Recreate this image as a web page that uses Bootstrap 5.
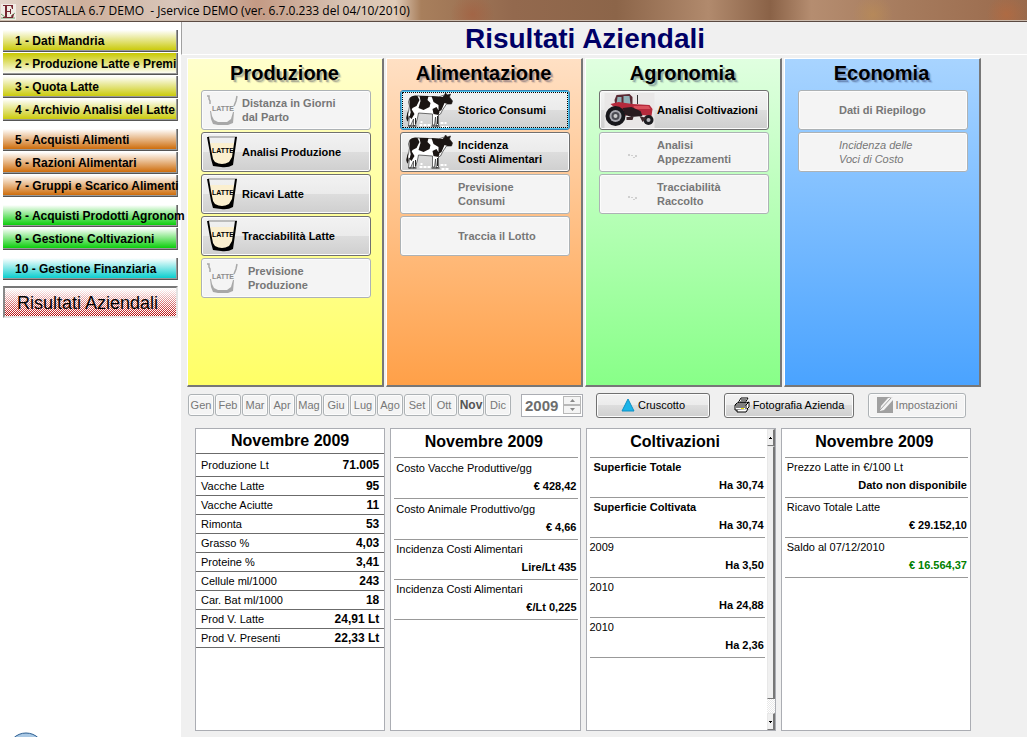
<!DOCTYPE html>
<html lang="it">
<head>
<meta charset="utf-8">
<meta name="viewport" content="width=device-width, initial-scale=1">
<title>ECOSTALLA 6.7 DEMO</title>
<link href="https://cdn.jsdelivr.net/npm/bootstrap@5.3.0/dist/css/bootstrap.min.css" rel="stylesheet">
<script src="https://cdn.jsdelivr.net/npm/bootstrap@5.3.0/dist/js/bootstrap.bundle.min.js" defer></script>
<style>
  body { font-family: "Liberation Sans", Arial, sans-serif; font-size: 11px; line-height: 14px; color: #000; background: #f0f0f0; }
  button { color: #000; }

  /* title bar */
  .app-title { height: 22px; padding-left: 1px; gap: 5px; border-bottom: 1px solid #5b4a42;
    font: 12px/21px "Open Sans", sans-serif; box-shadow: inset 0 -1px #cdbcae; white-space: pre;
    background:
      radial-gradient(circle at 46% 70%, #a8583880 0, #a8583800 22px),
      radial-gradient(circle at 98% 70%, #c0683880 0, #c0683800 20px),
      radial-gradient(circle at 85% 70%, #c0905080 0, #c0905000 20px),
      linear-gradient(90deg, #e3d5cb 0, #cfb09c 8%, #d8c6ba 17%, #c49a84 25%, #d5c0b0 33%, #e0cbb8 38.5%, #a87f5c 41%, #93694e 50%, #8c6549 60%, #b18a6d 69%, #8a6247 75%, #b58d70 79%, #a67b5d 88%, #9a6a4c 100%); }

  /* side menu */
  .side { width: 181px; flex: none; background: #fff; padding: 8px 3px 0; }
  .side-group { margin-bottom: 7px; }
  .side-btn { display: block; width: 100%; height: 22px; margin-bottom: 1px; padding: 0 0 0 12px; text-align: left;
    font-size: 12px; font-weight: 700; line-height: 22px; white-space: nowrap;
    border: 0; border-right: 1px solid #666; border-bottom: 1px solid #555; box-shadow: inset -1px -1px #999;
    background: linear-gradient(#fff, var(--tone)); }
  .side-btn.flip { background: linear-gradient(var(--tone), #fff); }
  .tone-milk { --tone: #c8c800; } .tone-feed { --tone: #cc6600; } .tone-crop { --tone: #00cc00; } .tone-cash { --tone: #00cccc; }
  .tone-cash { margin-bottom: 5px; }
  .side-current { display: block; width: 100%; height: 32px; padding: 0 0 0 12px; text-align: left; font-size: 18px; line-height: 30px;
    white-space: nowrap; border: 2px solid; border-color: #777 #e4e4e4 #e4e4e4 #888;
    background: repeating-conic-gradient(#fff 0 25%, #fff0 0 50%) 0 0 / 2px 2px, linear-gradient(#fff, #b80000); }

  /* heading */
  .page-head { border-left: 1px solid #a0a0a0; border-bottom: 1px solid #fff; height: 33px; padding-right: 39px; }
  .page-head h1 { margin: 0; font-size: 28px; line-height: 34px; font-weight: 700; color: #000066; }

  /* area panels */
  .areas { display: grid; grid-template-columns: repeat(4, minmax(0, 1fr)); gap: 2px; margin: 3px 46px 0 6px; }
  .area { height: 329px; padding: 2px 11px 0 13px; border: 1px solid #fff; border-right: 2px solid #777; border-bottom: 2px solid #777; }
  .area h2 { margin: 0 0 5px; font-size: 20px; line-height: 24px; font-weight: 700; text-align: center; text-shadow: 2px 2px #00003038, 3px 3px 1px #00003020; padding-right: 3px; }
  .area-milk { background: linear-gradient(#ffffcc, #ffff66); }
  .area-feed { background: linear-gradient(#ffe0c4, #ffa048); }
  .area-crop { background: linear-gradient(#e0ffe0, #88ff88); }
  .area-cash { background: linear-gradient(#a8d4ff, #4aa3ff); }

  .tool { border: 1px solid #707070; border-radius: 3px; box-shadow: inset 0 0 0 1px #fcfcfc;
    background: linear-gradient(#f2f2f2 0, #ebebeb 49%, #dddddd 50%, #cfcfcf 100%); }
  .tool:disabled { border-color: #adb2b5; background: #f4f4f4; color: #777; }
  .area .tool { display: flex; align-items: center; width: 100%; height: 40px; margin-bottom: 2px; padding: 0 0 0 4px; text-align: left; font-weight: 700; white-space: nowrap; }
  .area .tool.active-tool { border-color: #3c7fb1; box-shadow: inset 0 0 0 1px #4cc6f0; outline: 1px dotted #000; outline-offset: -3px; }
  .area .tool.fw-normal { font-weight: 400; }
  .pic-glass { flex: none; width: 36px; height: 34px; }
  .pic-wide { flex: none; width: 53px; height: 36px; }
  .pic-none { flex: none; width: 36px; }
  .past { padding-left: 6px; }

  /* control row */
  .controls { margin: 5px 0 0 7px; height: 26px; }
  .month { width: 26px; height: 22px; padding: 0; margin-right: 1px; color: #777; line-height: 18px; text-align: center; }
  .month.chosen { font-size: 12px; font-weight: 700; }
  .month:disabled.chosen { color: #555; }
  .year { width: 62px; height: 23px; margin-left: 9px; border: 1px solid #abadb3; background: #fff; padding: 1px; }
  .year input { width: 40px; border: 0; padding: 0 0 0 2px; font-size: 15px; font-weight: 700; color: #6d6d6d; background: #fff; }
  .spin { width: 18px; height: 9px; padding: 0; border: 1px solid #b8b8b8; background: #f4f4f4; display: flex; align-items: center; justify-content: center; }
  .wide-tool { height: 25px; padding: 0; display: flex; align-items: center; justify-content: center; gap: 3px; white-space: nowrap; }
  .w-a { width: 114px; margin-left: 13px; } .w-b { width: 130px; margin-left: 14px; } .w-c { width: 98px; margin-left: 14px; }

  /* summary boxes */
  .sums { display: grid; grid-template-columns: repeat(4, minmax(0, 1fr)); gap: 5px; margin: 10px 56px 6px 14px; }
  .sum { background: #fff; border: 1px solid #abadb3; min-height: 302px; }
  .sum h3 { margin: 0; font-size: 16px; line-height: 24px; font-weight: 700; text-align: center; }
  .herd { width: 100%; border-top: 1px solid #6b6b6b; }
  .herd th { font-weight: 400; padding: 0 0 0 5px; }
  .herd td { font-size: 12px; font-weight: 700; text-align: right; padding: 0 5px 0 0; }
  .herd tr { height: 19px; border-bottom: 1px solid #6b6b6b; }
  .herd tr.first-row { height: 23px; }
  .lined { margin: 0 2px 0 3px; flex: 1; min-width: 0; }
  .lined h3 { padding: 0 4px 2px 0; line-height: 26px; border-bottom: 1px solid #999; }
  .entry { height: 40px; padding: 0 1px 0 2px; line-height: 18px; border-bottom: 1px solid #999; white-space: nowrap; }
  .entry dt { font-weight: 400; } .entry dd { margin: 0; text-align: right; font-weight: 700; }
  .entry.tall { height: 41px; padding-top: 1px; }
  .entry.flush { padding-left: 0; }
  .entry.strong { padding-left: 4px; } .entry.strong dt { font-weight: 700; }
  .gain { color: #008000; }
  .bar { width: 8px; flex: none; background: repeating-conic-gradient(#fff 0 25%, #e8e8e8 0 50%) 0 0 / 2px 2px; }
  .bar-end, .bar-thumb { background: #f0f0f0; border: 1px solid #e8e8e8; border-right: 2px solid #777; border-bottom: 1px solid #777; }
  .bar-end { height: 17px; padding: 0; width: 8px; display: flex; align-items: center; justify-content: center; }
  .bar-thumb { flex: 1; margin-bottom: 14px; }
</style>
</head>
<body class="min-vh-100 d-flex flex-column">

<svg class="d-none" aria-hidden="true">
  <symbol id="glass" viewBox="0 0 36 34">
    <path d="M4 8H29L27 26Q26 30 16 30Q7 30 7 25Z" fill="#fbefcf"/>
    <path d="M2 2H31" stroke="#888" fill="none"/>
    <path d="M1 2H3L5 14L7 24L9 27Q16 31 23 27L26 22L29 2H31L29 16L27 30Q22 33 15 32L7 31L5 24Z"/>
    <text x="6" y="18" font-family="Liberation Sans Narrow, Liberation Sans, sans-serif" font-size="7">LATTE</text>
  </symbol>
  <symbol id="glass-off" viewBox="0 0 36 34">
    <path d="M1 3H3V6L4 8V11M31 3L30 8L28 13" fill="none" stroke="#a8a8a8" stroke-width="1.500"/>
    <path d="M4 18H5L6 23L8 27L12 29H21L25 26L27 19H28L27 30L22 32H12L7 31L5 26Z" fill="#a8a8a8"/>
    <text x="6" y="18" font-family="Liberation Sans Narrow, Liberation Sans, sans-serif" font-size="7" fill="#8c8c8c">LATTE</text>
  </symbol>
  <symbol id="cow" viewBox="0 0 52 36">
    <path d="M4 7Q7 3 14 4L33 5L39 3L40 1L42 3L45 2L44 5L47 9L46 12L41 12L37 18L35 22L33 23L33 33L31 34L30 25L29 33L27 33L27 22L13 21L12 26L10 33L8 34L8 27L5 34L3 34L4 24L2 29L1 26L3 20L4 14L3 10Z" fill="#fff" stroke="#333" stroke-width=".7"/>
    <path d="M4 6Q7 3 12 4L14 8L11 14L7 16L5 20L4 12ZM14 4L23 4L22 8L25 11L24 15L18 18L13 16L15 9ZM26 4L37 5L39 3L40 1L42 3L45 2L44 5L47 9L46 12L42 12L39 11L36 18L33 20L33 13L28 10ZM6 17L9 22L6 27L4 25ZM27 17L31 15L34 20L33 23L28 22ZM2 19L3 25L2 30L1 26Z" fill="#1b1513"/>
    <path d="M3 34H11M26 34H34M10 26L10 32M32 24V32" stroke="#222" fill="none"/>
    <path d="M14 33H25M35 31H41M15 30H17M36 35H43" stroke="#fff" stroke-width="2" stroke-dasharray="3 1" fill="none"/>
  </symbol>
  <symbol id="tractor" viewBox="0 0 52 36">
    <path d="M0 1H50V36H0Z" fill="#e9e7e7"/>
    <path d="M12 3L25 2L28 5V14H11L10 8Z" fill="#5a2a33"/>
    <path d="M13 5H17V12H12ZM19 4H25L26 12H19Z" fill="#8fb0b6"/>
    <path d="M6 12L14 10L28 12L45 13L48 17L47 24L37 23L27 22L20 24Z" fill="#b52a3c"/>
    <path d="M29 14H44L46 17L30 17Z" fill="#d8505c"/>
    <path d="M18 16L27 15L36 19L38 24L27 25L21 23Z" fill="#2a1c20"/>
    <path d="M33 3V12" stroke="#333"/>
    <circle cx="11" cy="24" r="10" fill="#17171b"/><circle cx="11" cy="24" r="6" fill="#a9a9b0"/><circle cx="11" cy="24" r="4" fill="#4b4b52"/><circle cx="11" cy="24" r="2" fill="#ccc"/>
    <circle cx="44" cy="28" r="5" fill="#1c1c20"/><circle cx="44" cy="28" r="2" fill="#b8b8bd"/>
    <path d="M22 25H29L28 28H22ZM35 24L42 26L38 30Z" fill="#40282c"/>
  </symbol>
  <symbol id="specks" viewBox="0 0 52 36">
    <path d="M24 20h1v2h-1zM27 21h1v1h-1zM29 23h1v1h-1zM31 21h1v2h-1z" fill="#aaa"/>
  </symbol>
</svg>

<header class="app-title d-flex">
  <svg width="15" height="16" viewBox="0 0 15 16" class="mt-1 flex-shrink-0" aria-hidden="true">
    <path d="M0 0H15V16H0Z" fill="#f1ece6"/>
    <path d="M0 10L4 13L6 11M10 12L14 9M0 14H14" stroke="#73a06f" fill="none"/>
    <path d="M2 1H12V5H11L10 2H6V7H9V5H10V10H9V8H6V13H10L12 10H13L12 14H2V13H4V2H2Z" fill="#762630"/>
  </svg><span>ECOSTALLA 6.7 DEMO  - Jservice DEMO (ver. 6.7.0.233 del 04/10/2010)</span>
</header>

<div class="d-flex flex-grow-1">
  <nav class="side d-flex flex-column" aria-label="Menu">
    <div class="side-group tone-milk">
      <button type="button" class="side-btn">1 - Dati Mandria</button>
      <button type="button" class="side-btn flip">2 - Produzione Latte e Premi</button>
      <button type="button" class="side-btn">3 - Quota Latte</button>
      <button type="button" class="side-btn">4 - Archivio Analisi del Latte</button>
    </div>
    <div class="side-group tone-feed">
      <button type="button" class="side-btn">5 - Acquisti Alimenti</button>
      <button type="button" class="side-btn">6 - Razioni Alimentari</button>
      <button type="button" class="side-btn">7 - Gruppi e Scarico Alimenti</button>
    </div>
    <div class="side-group tone-crop">
      <button type="button" class="side-btn">8 - Acquisti Prodotti Agronom</button>
      <button type="button" class="side-btn">9 - Gestione Coltivazioni</button>
    </div>
    <div class="side-group tone-cash">
      <button type="button" class="side-btn">10 - Gestione Finanziaria</button>
    </div>
    <button type="button" class="side-current">Risultati Aziendali</button>
    <svg class="mt-auto ms-2" width="30" height="5" viewBox="0 0 30 5" aria-hidden="true">
      <circle cx="15" cy="19" r="18" fill="#a9c8e4" stroke="#2d5f92" stroke-width="1"/>
    </svg>
  </nav>

  <main class="flex-grow-1 d-flex flex-column">
    <div class="page-head text-center"><h1>Risultati Aziendali</h1></div>

    <div class="areas">
      <section class="area area-milk">
        <h2>Produzione</h2>
        <button type="button" class="tool" disabled><svg class="pic-glass"><use href="#glass-off"/></svg><span>Distanza in Giorni<br>dal Parto</span></button>
        <button type="button" class="tool"><svg class="pic-glass"><use href="#glass"/></svg><span>Analisi Produzione</span></button>
        <button type="button" class="tool"><svg class="pic-glass"><use href="#glass"/></svg><span>Ricavi Latte</span></button>
        <button type="button" class="tool"><svg class="pic-glass"><use href="#glass"/></svg><span>Tracciabilità Latte</span></button>
        <button type="button" class="tool" disabled><svg class="pic-glass"><use href="#glass-off"/></svg><span class="past">Previsione<br>Produzione</span></button>
      </section>
      <section class="area area-feed">
        <h2>Alimentazione</h2>
        <button type="button" class="tool active-tool"><svg class="pic-wide"><use href="#cow"/></svg><span>Storico Consumi</span></button>
        <button type="button" class="tool"><svg class="pic-wide"><use href="#cow"/></svg><span>Incidenza<br>Costi Alimentari</span></button>
        <button type="button" class="tool" disabled><span class="pic-wide"></span><span>Previsione<br>Consumi</span></button>
        <button type="button" class="tool" disabled><span class="pic-wide"></span><span>Traccia il Lotto</span></button>
      </section>
      <section class="area area-crop">
        <h2>Agronomia</h2>
        <button type="button" class="tool"><svg class="pic-wide"><use href="#tractor"/></svg><span>Analisi Coltivazioni</span></button>
        <button type="button" class="tool" disabled><svg class="pic-wide"><use href="#specks"/></svg><span>Analisi<br>Appezzamenti</span></button>
        <button type="button" class="tool" disabled><svg class="pic-wide"><use href="#specks"/></svg><span>Tracciabilità<br>Raccolto</span></button>
      </section>
      <section class="area area-cash">
        <h2>Economia</h2>
        <button type="button" class="tool" disabled><span class="pic-none"></span><span>Dati di Riepilogo</span></button>
        <button type="button" class="tool fst-italic fw-normal" disabled><span class="pic-none"></span><span>Incidenza delle<br>Voci di Costo</span></button>
      </section>
    </div>

    <div class="controls d-flex align-items-center">
      <button type="button" class="tool month" disabled>Gen</button>
      <button type="button" class="tool month" disabled>Feb</button>
      <button type="button" class="tool month" disabled>Mar</button>
      <button type="button" class="tool month" disabled>Apr</button>
      <button type="button" class="tool month" disabled>Mag</button>
      <button type="button" class="tool month" disabled>Giu</button>
      <button type="button" class="tool month" disabled>Lug</button>
      <button type="button" class="tool month" disabled>Ago</button>
      <button type="button" class="tool month" disabled>Set</button>
      <button type="button" class="tool month" disabled>Ott</button>
      <button type="button" class="tool month chosen" disabled>Nov</button>
      <button type="button" class="tool month" disabled>Dic</button>
      <div class="year d-flex align-items-center">
        <input type="text" value="2009" aria-label="Anno" disabled>
        <div>
          <button type="button" class="spin" aria-label="Anno successivo" disabled><svg width="5" height="3" viewBox="0 0 5 3"><path d="M0 3L2.500 0L5 3Z" fill="#888"/></svg></button>
          <button type="button" class="spin" aria-label="Anno precedente" disabled><svg width="5" height="3" viewBox="0 0 5 3"><path d="M0 0L2.500 3L5 0Z" fill="#888"/></svg></button>
        </div>
      </div>
      <button type="button" class="tool wide-tool w-a"><svg width="14" height="14" viewBox="0 0 14 14"><path d="M7 1L13 13H1Z" fill="#1bb4e8" stroke="#0f8fc4"/></svg><span>Cruscotto</span></button>
      <button type="button" class="tool wide-tool w-b"><svg width="16" height="16" viewBox="0 0 16 16"><path d="M4 6L7 1H14L11 6Z" fill="#fff" stroke="#000"/><path d="M7 3H12M6 5H11" stroke="#000"/><path d="M1 8L3 6H12L15 5V10L12 13H1Z" fill="#fff" stroke="#000"/><path d="M1 8H12V13M12 8L15 5M2 10H11" stroke="#000" fill="none"/><path d="M3 13V15H12L14 12" fill="#fff" stroke="#000"/><path d="M7 11H10V12H7Z" fill="#f2e600"/></svg><span>Fotografia Azienda</span></button>
      <button type="button" class="tool wide-tool w-c" disabled><svg width="16" height="16" viewBox="0 0 16 16"><path d="M0 0H16V16H0Z" fill="#a0a0a0"/><path d="M4 9L11 1L16 0V3L7 13L3 14Z" fill="#f4f4f4"/><path d="M3 13L14 1" stroke="#a0a0a0"/></svg><span>Impostazioni</span></button>
    </div>

    <div class="sums flex-grow-1">
      <section class="sum">
        <h3>Novembre 2009</h3>
        <table class="herd">
          <tr class="first-row"><th scope="row">Produzione Lt</th><td>71.005</td></tr>
          <tr><th scope="row">Vacche Latte</th><td>95</td></tr>
          <tr><th scope="row">Vacche Aciutte</th><td>11</td></tr>
          <tr><th scope="row">Rimonta</th><td>53</td></tr>
          <tr><th scope="row">Grasso %</th><td>4,03</td></tr>
          <tr><th scope="row">Proteine %</th><td>3,41</td></tr>
          <tr><th scope="row">Cellule ml/1000</th><td>243</td></tr>
          <tr><th scope="row">Car. Bat ml/1000</th><td>18</td></tr>
          <tr><th scope="row">Prod V. Latte</th><td>24,91 Lt</td></tr>
          <tr><th scope="row">Prod V. Presenti</th><td>22,33 Lt</td></tr>
        </table>
      </section>
      <section class="sum d-flex">
        <div class="lined">
          <h3>Novembre 2009</h3>
          <dl class="m-0">
            <div class="entry tall"><dt>Costo Vacche Produttive/gg</dt><dd>€ 428,42</dd></div>
            <div class="entry tall"><dt>Costo Animale Produttivo/gg</dt><dd>€ 4,66</dd></div>
            <div class="entry"><dt>Incidenza Costi Alimentari</dt><dd>Lire/Lt 435</dd></div>
            <div class="entry"><dt>Incidenza Costi Alimentari</dt><dd>€/Lt 0,225</dd></div>
          </dl>
        </div>
      </section>
      <section class="sum d-flex">
        <div class="lined">
          <h3>Coltivazioni</h3>
          <dl class="m-0">
            <div class="entry strong"><dt>Superficie Totale</dt><dd>Ha 30,74</dd></div>
            <div class="entry strong"><dt>Superficie Coltivata</dt><dd>Ha 30,74</dd></div>
            <div class="entry flush"><dt>2009</dt><dd>Ha 3,50</dd></div>
            <div class="entry flush"><dt>2010</dt><dd>Ha 24,88</dd></div>
            <div class="entry flush"><dt>2010</dt><dd>Ha 2,36</dd></div>
          </dl>
        </div>
        <div class="bar d-flex flex-column">
          <button type="button" class="bar-end" aria-label="Scorri su"><svg width="3" height="2" viewBox="0 0 3 2"><path d="M1 0h1v1h1v1H0V1h1z"/></svg></button>
          <div class="bar-thumb"></div>
          <button type="button" class="bar-end" aria-label="Scorri giù"><svg width="3" height="2" viewBox="0 0 3 2"><path d="M0 0h3v1H2v1H1V1H0z"/></svg></button>
        </div>
      </section>
      <section class="sum d-flex">
        <div class="lined">
          <h3>Novembre 2009</h3>
          <dl class="m-0">
            <div class="entry"><dt>Prezzo Latte in €/100 Lt</dt><dd>Dato non disponibile</dd></div>
            <div class="entry"><dt>Ricavo Totale Latte</dt><dd>€ 29.152,10</dd></div>
            <div class="entry"><dt>Saldo al 07/12/2010</dt><dd class="gain">€ 16.564,37</dd></div>
          </dl>
        </div>
      </section>
    </div>
  </main>
</div>
</body>
</html>
